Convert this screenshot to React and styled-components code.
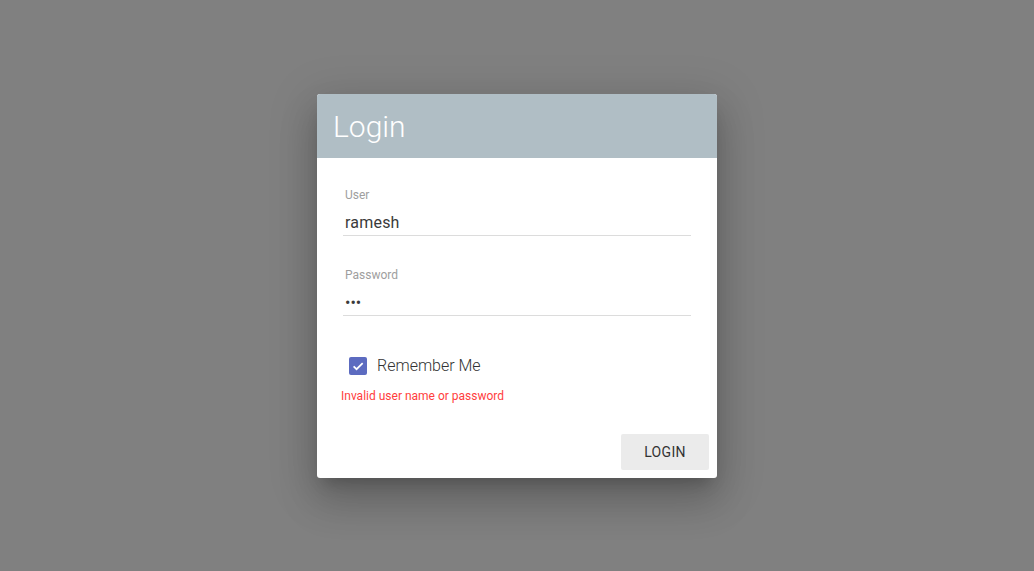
import styled, { createGlobalStyle } from "styled-components"

const Global = createGlobalStyle`
    html, body {
        margin: 0;
        height: 100%;
    }
    body {
        background: #808080;
        font-family: Roboto, "Liberation Sans", sans-serif;
    }
`

const Page = styled.div`
    height: 571px;
    display: flex;
    justify-content: center;
    padding-top: 94px;
    box-sizing: border-box;
`

const Card = styled.div`
    width: 400px;
    height: 384px;
    background: #fff;
    border-radius: 3px;
    overflow: hidden;
    box-shadow: 0 11px 15px -7px rgba(0,0,0,.2), 0 24px 38px 3px rgba(0,0,0,.14), 0 9px 46px 8px rgba(0,0,0,.12);
    display: flex;
    flex-direction: column;
`

const Header = styled.div`
    height: 64px;
    background: #b0bec5;
    display: flex;
    align-items: center;
    padding-left: 16px;
`

const Title = styled.h1`
    margin: 0;
    font-size: 30px;
    font-weight: 300;
    color: #fff;
`

const Body = styled.div`
    padding: 26px 26px 0 24px;
    flex: 1;
    display: flex;
    flex-direction: column;
`

const Field = styled.div`
    margin: 0 0 28px 2px;
    border-bottom: 1px solid #dcdcdc;
    padding-top: 4px;
    height: 52px;
    box-sizing: border-box;
`

const Label = styled.div`
    font-size: 12px;
    color: #9e9e9e;
    padding-left: 2px;
    line-height: 14px;
`

const Value = styled.div`
    font-size: 16px;
    color: #3a3a3a;
    padding-left: 2px;
    margin-top: 11px;
    line-height: 20px;
    letter-spacing: ${p => (p.$dots ? "0" : "0.2px")};
`

const CheckRow = styled.div`
    display: flex;
    align-items: center;
    gap: 10px;
    margin: 12px 0 0 8px;
`

const Box = styled.span`
    width: 18px;
    height: 18px;
    border-radius: 2px;
    background: #5c6bc0;
    display: flex;
    align-items: center;
    justify-content: center;
`

const CheckLabel = styled.span`
    font-size: 16px;
    font-weight: 300;
    color: #333;
`

const Error = styled.div`
    margin-top: 14px;
    font-size: 12px;
    color: #ff3d3d;
`

const Footer = styled.div`
    margin-top: auto;
    display: flex;
    justify-content: flex-end;
    padding: 0 8px 8px 0;
    margin-right: -26px;
`

const Button = styled.button`
    width: 88px;
    height: 36px;
    border: none;
    border-radius: 2px;
    background: #ebebeb;
    font-family: Roboto, "Liberation Sans", sans-serif;
    font-size: 14px;
    color: #333;
    letter-spacing: 0.3px;
`

export default function App() {
    return (
        <>
            <Global />
            <Page>
                <Card>
                    <Header>
                        <Title>Login</Title>
                    </Header>
                    <Body>
                        <Field>
                            <Label>User</Label>
                            <Value>ramesh</Value>
                        </Field>
                        <Field>
                            <Label>Password</Label>
                            <Value $dots>•••</Value>
                        </Field>
                        <CheckRow>
                            <Box>
                                <svg width="14" height="14" viewBox="0 0 24 24">
                                    <path d="M4.5 12.5l5 5L20 7" fill="none" stroke="#fff" strokeWidth="3" />
                                </svg>
                            </Box>
                            <CheckLabel>Remember Me</CheckLabel>
                        </CheckRow>
                        <Error>Invalid user name or password</Error>
                        <Footer>
                            <Button>LOGIN</Button>
                        </Footer>
                    </Body>
                </Card>
            </Page>
        </>
    )
}
